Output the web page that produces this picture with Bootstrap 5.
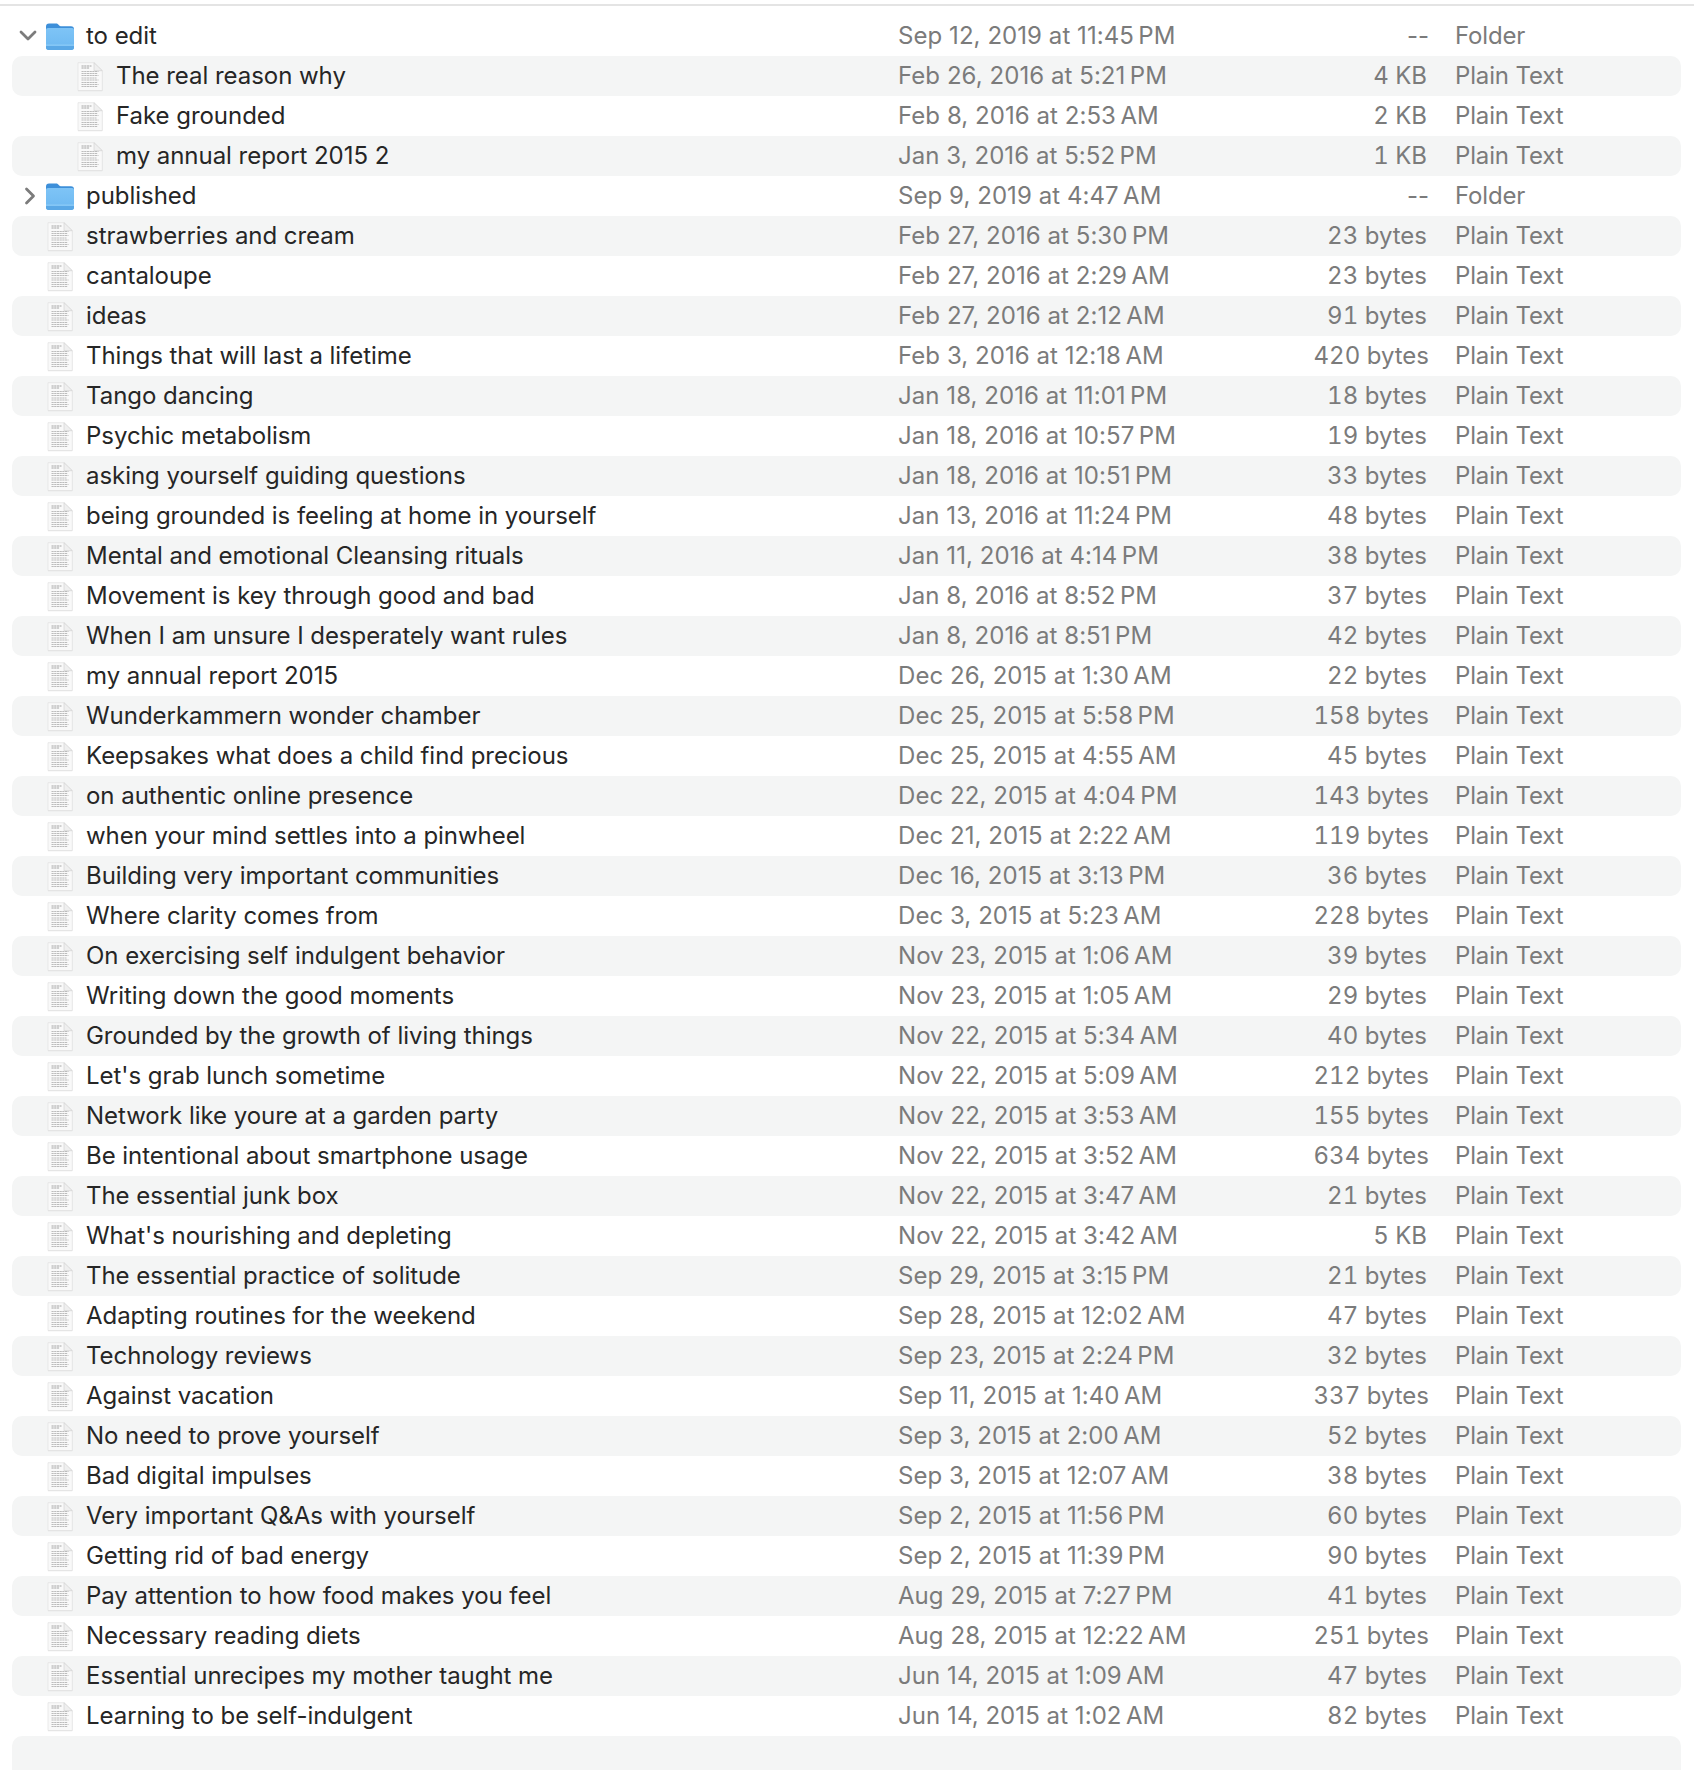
<!doctype html>
<html lang="en"><head><meta charset="utf-8"><title>Files</title>
<link href="https://cdn.jsdelivr.net/npm/bootstrap@5.3.0/dist/css/bootstrap.min.css" rel="stylesheet">
<style>
html,body{background:#fff;overflow:hidden;height:1770px}
body{font-family:Inter,"Liberation Sans",sans-serif;font-size:24px;color:#262626;-webkit-font-smoothing:antialiased}
.top-rule{height:2px;margin:4px 0 10px;background:#e4e4e4}
.file-list{padding:0 13px 0 12px}
.file-row{height:40px;white-space:nowrap;line-height:42px}
.file-row:nth-child(even),.row-end{background:#f4f5f5;border-radius:10px}
.row-end{height:40px;border-radius:10px 10px 0 0}
.twist{width:34px;flex:none;display:flex;justify-content:center}
.twist svg{width:20px;height:20px;margin-left:-3px}
.twist .tw-r{margin-left:2px}
.ico{width:28px;height:32px;flex:none}
.kid .ico{margin-left:30px}
.fname{margin-left:12px;flex:1 1 0;min-width:0;letter-spacing:-.04px}
.fdate{width:361px;flex:none;color:#7b7b7b;letter-spacing:.06px}
.fsize{width:168px;flex:none;color:#7b7b7b;text-align:right;font-variant-numeric:tabular-nums}
.fsize.wide{margin-right:-2px;margin-left:2px}
.fsize.dash{font-variant-numeric:normal}
.fkind{margin-left:28px;width:226px;flex:none;color:#7b7b7b;letter-spacing:-.15px}
</style></head><body>
<svg width="0" height="0" class="d-block" aria-hidden="true"><defs>
<linearGradient id="fb" x1="0" y1="0" x2="0" y2="1"><stop offset="0" stop-color="#7ec4f6"/><stop offset="1" stop-color="#6db8f1"/></linearGradient>
<symbol id="i-folder" viewBox="0 0 28 32">
<path d="M0 6.500C0 4.500 1 3.500 3 3.500h7c1.500 0 2 .6 3 1.700.7.800 1.200 1.100 2.500 1.100H25c2 0 3 1 3 3V12H0z" fill="#3d8fd9"/>
<path d="M0 10c0-1.200.8-2 2-2h24c1.200 0 2 .8 2 2v17.500c0 1.500-1 2.500-2.500 2.500h-23C1 30 0 29 0 27.500z" fill="url(#fb)"/>
<path d="M0 26h28v1.500c0 1.500-1 2.500-2.500 2.500h-23C1 30 0 29 0 27.500z" fill="#5aa8e6"/>
<path d="M0 24.600h28v1H0z" fill="#92cff8"/>
</symbol>
<symbol id="i-doc" viewBox="0 0 28 32">
<path d="M2 3.500h16l8.300 8v19.700H2z" fill="#d4d4d4" opacity=".55"/>
<path d="M2 2.700h16l8.300 8v19.800H2z" fill="#f9f9f9" stroke="#dedede" stroke-width=".6"/>
<path d="M18 2.700v8h8.300z" fill="#efefef" stroke="#cfcfcf" stroke-width=".6"/>
<g fill="none" stroke-width="1.100" stroke-dasharray="2.200 .5">
<path d="M5.500 6h10M5.500 8h8" stroke="#a6a6a6"/>
<path d="M5.500 11.500h17M5.500 13.500h16M5.500 15.500h17M5.500 18h15M5.500 20h17M5.500 22.500h16M5.500 24.500h17M5.500 26.500h16" stroke="#bcbcbc"/></g>
</symbol>
<symbol id="i-down" viewBox="0 0 20 20"><path d="M3 6l7 7 7-7" fill="none" stroke="#7c7c7c" stroke-width="2.800" stroke-linecap="round" stroke-linejoin="round"/></symbol>
<symbol id="i-right" viewBox="0 0 20 20"><path d="M6.500 3l7 7-7 7" fill="none" stroke="#7c7c7c" stroke-width="2.800" stroke-linecap="round" stroke-linejoin="round"/></symbol>
</defs></svg>
<div class="top-rule"></div>
<div class="file-list">
<div class="file-row d-flex align-items-center"><span class="twist"><svg><use href="#i-down"/></svg></span><svg class="ico"><use href="#i-folder"/></svg><span class="fname">to edit</span><span class="fdate">Sep 12, 2019 at 11:45&thinsp;PM</span><span class="fsize wide dash">--</span><span class="fkind">Folder</span></div>
<div class="file-row kid d-flex align-items-center"><span class="twist"></span><svg class="ico"><use href="#i-doc"/></svg><span class="fname">The real reason why</span><span class="fdate">Feb 26, 2016 at 5:21&thinsp;PM</span><span class="fsize">4 KB</span><span class="fkind">Plain Text</span></div>
<div class="file-row kid d-flex align-items-center"><span class="twist"></span><svg class="ico"><use href="#i-doc"/></svg><span class="fname">Fake grounded</span><span class="fdate">Feb 8, 2016 at 2:53&thinsp;AM</span><span class="fsize">2 KB</span><span class="fkind">Plain Text</span></div>
<div class="file-row kid d-flex align-items-center"><span class="twist"></span><svg class="ico"><use href="#i-doc"/></svg><span class="fname">my annual report 2015 2</span><span class="fdate">Jan 3, 2016 at 5:52&thinsp;PM</span><span class="fsize">1 KB</span><span class="fkind">Plain Text</span></div>
<div class="file-row d-flex align-items-center"><span class="twist"><svg class="tw-r"><use href="#i-right"/></svg></span><svg class="ico"><use href="#i-folder"/></svg><span class="fname">published</span><span class="fdate">Sep 9, 2019 at 4:47&thinsp;AM</span><span class="fsize wide dash">--</span><span class="fkind">Folder</span></div>
<div class="file-row d-flex align-items-center"><span class="twist"></span><svg class="ico"><use href="#i-doc"/></svg><span class="fname">strawberries and cream</span><span class="fdate">Feb 27, 2016 at 5:30&thinsp;PM</span><span class="fsize">23 bytes</span><span class="fkind">Plain Text</span></div>
<div class="file-row d-flex align-items-center"><span class="twist"></span><svg class="ico"><use href="#i-doc"/></svg><span class="fname">cantaloupe</span><span class="fdate">Feb 27, 2016 at 2:29&thinsp;AM</span><span class="fsize">23 bytes</span><span class="fkind">Plain Text</span></div>
<div class="file-row d-flex align-items-center"><span class="twist"></span><svg class="ico"><use href="#i-doc"/></svg><span class="fname">ideas</span><span class="fdate">Feb 27, 2016 at 2:12&thinsp;AM</span><span class="fsize">91 bytes</span><span class="fkind">Plain Text</span></div>
<div class="file-row d-flex align-items-center"><span class="twist"></span><svg class="ico"><use href="#i-doc"/></svg><span class="fname">Things that will last a lifetime</span><span class="fdate">Feb 3, 2016 at 12:18&thinsp;AM</span><span class="fsize wide">420 bytes</span><span class="fkind">Plain Text</span></div>
<div class="file-row d-flex align-items-center"><span class="twist"></span><svg class="ico"><use href="#i-doc"/></svg><span class="fname">Tango dancing</span><span class="fdate">Jan 18, 2016 at 11:01&thinsp;PM</span><span class="fsize">18 bytes</span><span class="fkind">Plain Text</span></div>
<div class="file-row d-flex align-items-center"><span class="twist"></span><svg class="ico"><use href="#i-doc"/></svg><span class="fname">Psychic metabolism</span><span class="fdate">Jan 18, 2016 at 10:57&thinsp;PM</span><span class="fsize">19 bytes</span><span class="fkind">Plain Text</span></div>
<div class="file-row d-flex align-items-center"><span class="twist"></span><svg class="ico"><use href="#i-doc"/></svg><span class="fname">asking yourself guiding questions</span><span class="fdate">Jan 18, 2016 at 10:51&thinsp;PM</span><span class="fsize">33 bytes</span><span class="fkind">Plain Text</span></div>
<div class="file-row d-flex align-items-center"><span class="twist"></span><svg class="ico"><use href="#i-doc"/></svg><span class="fname">being grounded is feeling at home in yourself</span><span class="fdate">Jan 13, 2016 at 11:24&thinsp;PM</span><span class="fsize">48 bytes</span><span class="fkind">Plain Text</span></div>
<div class="file-row d-flex align-items-center"><span class="twist"></span><svg class="ico"><use href="#i-doc"/></svg><span class="fname">Mental and emotional Cleansing rituals</span><span class="fdate">Jan 11, 2016 at 4:14&thinsp;PM</span><span class="fsize">38 bytes</span><span class="fkind">Plain Text</span></div>
<div class="file-row d-flex align-items-center"><span class="twist"></span><svg class="ico"><use href="#i-doc"/></svg><span class="fname">Movement is key through good and bad</span><span class="fdate">Jan 8, 2016 at 8:52&thinsp;PM</span><span class="fsize">37 bytes</span><span class="fkind">Plain Text</span></div>
<div class="file-row d-flex align-items-center"><span class="twist"></span><svg class="ico"><use href="#i-doc"/></svg><span class="fname">When I am unsure I desperately want rules</span><span class="fdate">Jan 8, 2016 at 8:51&thinsp;PM</span><span class="fsize">42 bytes</span><span class="fkind">Plain Text</span></div>
<div class="file-row d-flex align-items-center"><span class="twist"></span><svg class="ico"><use href="#i-doc"/></svg><span class="fname">my annual report 2015</span><span class="fdate">Dec 26, 2015 at 1:30&thinsp;AM</span><span class="fsize">22 bytes</span><span class="fkind">Plain Text</span></div>
<div class="file-row d-flex align-items-center"><span class="twist"></span><svg class="ico"><use href="#i-doc"/></svg><span class="fname">Wunderkammern wonder chamber</span><span class="fdate">Dec 25, 2015 at 5:58&thinsp;PM</span><span class="fsize wide">158 bytes</span><span class="fkind">Plain Text</span></div>
<div class="file-row d-flex align-items-center"><span class="twist"></span><svg class="ico"><use href="#i-doc"/></svg><span class="fname">Keepsakes what does a child find precious</span><span class="fdate">Dec 25, 2015 at 4:55&thinsp;AM</span><span class="fsize">45 bytes</span><span class="fkind">Plain Text</span></div>
<div class="file-row d-flex align-items-center"><span class="twist"></span><svg class="ico"><use href="#i-doc"/></svg><span class="fname">on authentic online presence</span><span class="fdate">Dec 22, 2015 at 4:04&thinsp;PM</span><span class="fsize wide">143 bytes</span><span class="fkind">Plain Text</span></div>
<div class="file-row d-flex align-items-center"><span class="twist"></span><svg class="ico"><use href="#i-doc"/></svg><span class="fname">when your mind settles into a pinwheel</span><span class="fdate">Dec 21, 2015 at 2:22&thinsp;AM</span><span class="fsize wide">119 bytes</span><span class="fkind">Plain Text</span></div>
<div class="file-row d-flex align-items-center"><span class="twist"></span><svg class="ico"><use href="#i-doc"/></svg><span class="fname">Building very important communities</span><span class="fdate">Dec 16, 2015 at 3:13&thinsp;PM</span><span class="fsize">36 bytes</span><span class="fkind">Plain Text</span></div>
<div class="file-row d-flex align-items-center"><span class="twist"></span><svg class="ico"><use href="#i-doc"/></svg><span class="fname">Where clarity comes from</span><span class="fdate">Dec 3, 2015 at 5:23&thinsp;AM</span><span class="fsize wide">228 bytes</span><span class="fkind">Plain Text</span></div>
<div class="file-row d-flex align-items-center"><span class="twist"></span><svg class="ico"><use href="#i-doc"/></svg><span class="fname">On exercising self indulgent behavior</span><span class="fdate">Nov 23, 2015 at 1:06&thinsp;AM</span><span class="fsize">39 bytes</span><span class="fkind">Plain Text</span></div>
<div class="file-row d-flex align-items-center"><span class="twist"></span><svg class="ico"><use href="#i-doc"/></svg><span class="fname">Writing down the good moments</span><span class="fdate">Nov 23, 2015 at 1:05&thinsp;AM</span><span class="fsize">29 bytes</span><span class="fkind">Plain Text</span></div>
<div class="file-row d-flex align-items-center"><span class="twist"></span><svg class="ico"><use href="#i-doc"/></svg><span class="fname">Grounded by the growth of living things</span><span class="fdate">Nov 22, 2015 at 5:34&thinsp;AM</span><span class="fsize">40 bytes</span><span class="fkind">Plain Text</span></div>
<div class="file-row d-flex align-items-center"><span class="twist"></span><svg class="ico"><use href="#i-doc"/></svg><span class="fname">Let's grab lunch sometime</span><span class="fdate">Nov 22, 2015 at 5:09&thinsp;AM</span><span class="fsize wide">212 bytes</span><span class="fkind">Plain Text</span></div>
<div class="file-row d-flex align-items-center"><span class="twist"></span><svg class="ico"><use href="#i-doc"/></svg><span class="fname">Network like youre at a garden party</span><span class="fdate">Nov 22, 2015 at 3:53&thinsp;AM</span><span class="fsize wide">155 bytes</span><span class="fkind">Plain Text</span></div>
<div class="file-row d-flex align-items-center"><span class="twist"></span><svg class="ico"><use href="#i-doc"/></svg><span class="fname">Be intentional about smartphone usage</span><span class="fdate">Nov 22, 2015 at 3:52&thinsp;AM</span><span class="fsize wide">634 bytes</span><span class="fkind">Plain Text</span></div>
<div class="file-row d-flex align-items-center"><span class="twist"></span><svg class="ico"><use href="#i-doc"/></svg><span class="fname">The essential junk box</span><span class="fdate">Nov 22, 2015 at 3:47&thinsp;AM</span><span class="fsize">21 bytes</span><span class="fkind">Plain Text</span></div>
<div class="file-row d-flex align-items-center"><span class="twist"></span><svg class="ico"><use href="#i-doc"/></svg><span class="fname">What's nourishing and depleting</span><span class="fdate">Nov 22, 2015 at 3:42&thinsp;AM</span><span class="fsize">5 KB</span><span class="fkind">Plain Text</span></div>
<div class="file-row d-flex align-items-center"><span class="twist"></span><svg class="ico"><use href="#i-doc"/></svg><span class="fname">The essential practice of solitude</span><span class="fdate">Sep 29, 2015 at 3:15&thinsp;PM</span><span class="fsize">21 bytes</span><span class="fkind">Plain Text</span></div>
<div class="file-row d-flex align-items-center"><span class="twist"></span><svg class="ico"><use href="#i-doc"/></svg><span class="fname">Adapting routines for the weekend</span><span class="fdate">Sep 28, 2015 at 12:02&thinsp;AM</span><span class="fsize">47 bytes</span><span class="fkind">Plain Text</span></div>
<div class="file-row d-flex align-items-center"><span class="twist"></span><svg class="ico"><use href="#i-doc"/></svg><span class="fname">Technology reviews</span><span class="fdate">Sep 23, 2015 at 2:24&thinsp;PM</span><span class="fsize">32 bytes</span><span class="fkind">Plain Text</span></div>
<div class="file-row d-flex align-items-center"><span class="twist"></span><svg class="ico"><use href="#i-doc"/></svg><span class="fname">Against vacation</span><span class="fdate">Sep 11, 2015 at 1:40&thinsp;AM</span><span class="fsize wide">337 bytes</span><span class="fkind">Plain Text</span></div>
<div class="file-row d-flex align-items-center"><span class="twist"></span><svg class="ico"><use href="#i-doc"/></svg><span class="fname">No need to prove yourself</span><span class="fdate">Sep 3, 2015 at 2:00&thinsp;AM</span><span class="fsize">52 bytes</span><span class="fkind">Plain Text</span></div>
<div class="file-row d-flex align-items-center"><span class="twist"></span><svg class="ico"><use href="#i-doc"/></svg><span class="fname">Bad digital impulses</span><span class="fdate">Sep 3, 2015 at 12:07&thinsp;AM</span><span class="fsize">38 bytes</span><span class="fkind">Plain Text</span></div>
<div class="file-row d-flex align-items-center"><span class="twist"></span><svg class="ico"><use href="#i-doc"/></svg><span class="fname">Very important Q&amp;As with yourself</span><span class="fdate">Sep 2, 2015 at 11:56&thinsp;PM</span><span class="fsize">60 bytes</span><span class="fkind">Plain Text</span></div>
<div class="file-row d-flex align-items-center"><span class="twist"></span><svg class="ico"><use href="#i-doc"/></svg><span class="fname">Getting rid of bad energy</span><span class="fdate">Sep 2, 2015 at 11:39&thinsp;PM</span><span class="fsize">90 bytes</span><span class="fkind">Plain Text</span></div>
<div class="file-row d-flex align-items-center"><span class="twist"></span><svg class="ico"><use href="#i-doc"/></svg><span class="fname">Pay attention to how food makes you feel</span><span class="fdate">Aug 29, 2015 at 7:27&thinsp;PM</span><span class="fsize">41 bytes</span><span class="fkind">Plain Text</span></div>
<div class="file-row d-flex align-items-center"><span class="twist"></span><svg class="ico"><use href="#i-doc"/></svg><span class="fname">Necessary reading diets</span><span class="fdate">Aug 28, 2015 at 12:22&thinsp;AM</span><span class="fsize wide">251 bytes</span><span class="fkind">Plain Text</span></div>
<div class="file-row d-flex align-items-center"><span class="twist"></span><svg class="ico"><use href="#i-doc"/></svg><span class="fname">Essential unrecipes my mother taught me</span><span class="fdate">Jun 14, 2015 at 1:09&thinsp;AM</span><span class="fsize">47 bytes</span><span class="fkind">Plain Text</span></div>
<div class="file-row d-flex align-items-center"><span class="twist"></span><svg class="ico"><use href="#i-doc"/></svg><span class="fname">Learning to be self-indulgent</span><span class="fdate">Jun 14, 2015 at 1:02&thinsp;AM</span><span class="fsize">82 bytes</span><span class="fkind">Plain Text</span></div>
<div class="row-end"></div>
</div>
</body></html>
